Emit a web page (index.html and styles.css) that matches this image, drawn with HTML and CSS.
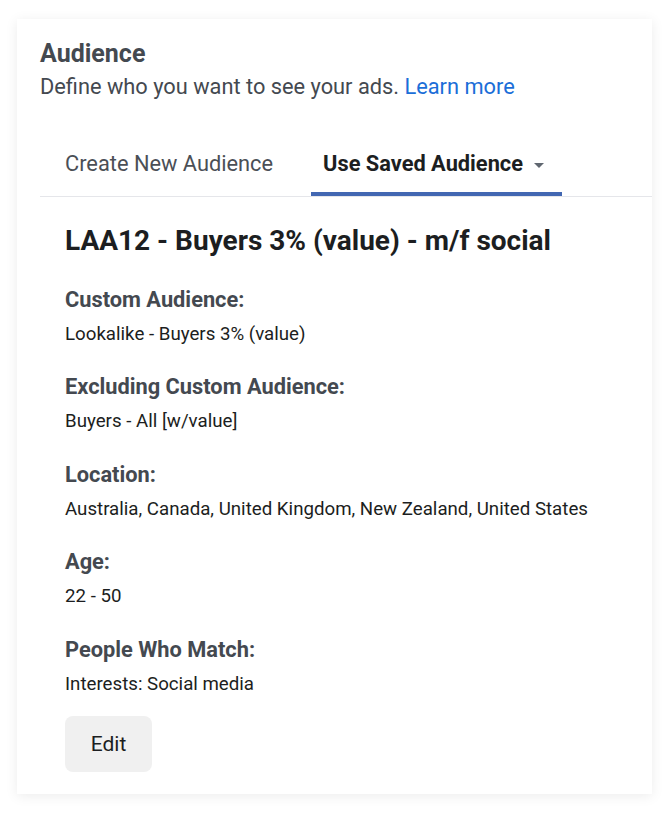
FILE: index.html
```html
<!DOCTYPE html>
<html lang="en">
<head>
  <meta charset="UTF-8" />
  <title>Audience</title>
  <link rel="stylesheet" href="styles.css">
</head>
<body>
  <div class="card">
    <div class="card-head">
      <h2>Audience</h2>
      <p class="sub">Define who you want to see your ads. <a href="#">Learn more</a></p>
    </div>

    <div class="tabs">
      <div class="tab">Create New Audience</div>
      <div class="tab active">Use Saved Audience <span class="caret"></span></div>
    </div>

    <div class="saved">
      <h3>LAA12 - Buyers 3% (value) - m/f social</h3>

      <div class="field">
        <div class="label">Custom Audience:</div>
        <div class="value">Lookalike - Buyers 3% (value)</div>
      </div>
      <div class="field">
        <div class="label">Excluding Custom Audience:</div>
        <div class="value">Buyers - All [w/value]</div>
      </div>
      <div class="field">
        <div class="label">Location:</div>
        <div class="value">Australia, Canada, United Kingdom, New Zealand, United States</div>
      </div>
      <div class="field">
        <div class="label">Age:</div>
        <div class="value">22 - 50</div>
      </div>
      <div class="field">
        <div class="label">People Who Match:</div>
        <div class="value">Interests: Social media</div>
      </div>

      <button class="edit">Edit</button>
    </div>
  </div>
</body>
</html>
```

FILE: styles.css
```css
body { font-family: Roboto, "Liberation Sans", sans-serif; background: #fff; margin: 0; padding: 19px 17px; color: #444950; }
.card { background: #fff; width: 635px; height: 775px; box-sizing: border-box; padding-top: 20px; box-shadow: 0 2px 12px rgba(0,0,0,0.08); }
.card-head { padding: 0 23px; }
h2 { margin: 0; font-size: 25px; font-weight: 700; line-height: 30px; color: #444950; }
.sub { margin: 4px 0 0; font-size: 21.8px; line-height: 28px; color: #444950; }
.sub a { color: #1b6ed8; text-decoration: none; }
.tabs { display: flex; gap: 26px; margin: 38px 0 0 23px; padding-left: 13px; border-bottom: 1px solid #e5e6ea; }
.tab { padding: 12px 12px 15px; font-size: 21.8px; line-height: 26px; color: #4b4f56; border-bottom: 4px solid transparent; }
.tab.active { font-weight: 700; color: #1c1e21; border-bottom-color: #4267b2; padding-right: 18px; }
.caret { display: inline-block; width: 0; height: 0; border-left: 5px solid transparent; border-right: 5px solid transparent; border-top: 5px solid #606770; vertical-align: middle; margin-left: 6px; }
.saved { padding: 27px 48px 0; }
h3 { margin: 0; font-size: 28px; line-height: 34px; font-weight: 700; color: #1c1e21; }
.field { margin-top: 28.5px; }
.label { font-size: 21.8px; line-height: 26px; font-weight: 700; color: #444950; }
.value { margin-top: 9px; font-size: 18.7px; line-height: 24px; color: #1c1e21; }
.edit { margin-top: 20px; width: 87px; height: 56px; border: none; border-radius: 8px; background: #f0f0f0; font-family: inherit; font-size: 21px; color: #1c1e21; }
```
